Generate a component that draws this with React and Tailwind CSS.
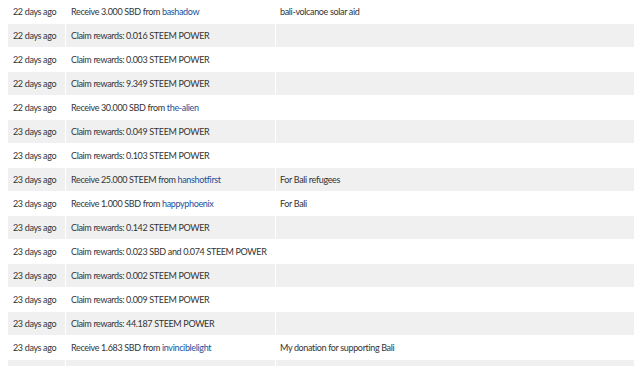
import React from "react";

const rows = [
  ["22 days ago", ["Receive 3.000 SBD from ", "bashadow"], "bali-volcanoe solar aid"],
  ["22 days ago", ["Claim rewards: 0.016 STEEM POWER"], ""],
  ["22 days ago", ["Claim rewards: 0.003 STEEM POWER"], ""],
  ["22 days ago", ["Claim rewards: 9.349 STEEM POWER"], ""],
  ["22 days ago", ["Receive 30.000 SBD from ", "the-alien"], ""],
  ["23 days ago", ["Claim rewards: 0.049 STEEM POWER"], ""],
  ["23 days ago", ["Claim rewards: 0.103 STEEM POWER"], ""],
  ["23 days ago", ["Receive 25.000 STEEM from ", "hanshotfirst"], "For Bali refugees"],
  ["23 days ago", ["Receive 1.000 SBD from ", "happyphoenix"], "For Bali"],
  ["23 days ago", ["Claim rewards: 0.142 STEEM POWER"], ""],
  ["23 days ago", ["Claim rewards: 0.023 SBD and 0.074 STEEM POWER"], ""],
  ["23 days ago", ["Claim rewards: 0.002 STEEM POWER"], ""],
  ["23 days ago", ["Claim rewards: 0.009 STEEM POWER"], ""],
  ["23 days ago", ["Claim rewards: 44.187 STEEM POWER"], ""],
  ["23 days ago", ["Receive 1.683 SBD from ", "invinciblelight"], "My donation for supporting Bali"],
  ["23 days ago", ["Claim rewards: 0.010 STEEM POWER"], ""],
];

export default function App() {
  return (
    <div
      className="w-[640px] h-[366px] overflow-hidden bg-white pl-[8px] pr-[6px] text-[9px] tracking-[-0.35px] text-[#333]"
      style={{ fontFamily: "Lato, 'Noto Sans', sans-serif" }}
    >
      <div className="flex flex-col">
        {rows.map((r, i) => {
          const bg = i % 2 === 1 ? "bg-[#f0f0f0]" : "bg-white";
          return (
            <div key={i} className="flex h-[24px] gap-[1px] pb-[1px]">
              <div className={`w-[57px] shrink-0 leading-[23px] pl-[5px] whitespace-nowrap overflow-hidden ${bg}`}>{r[0]}</div>
              <div className={`w-[209px] shrink-0 leading-[23px] pl-[5px] whitespace-nowrap overflow-hidden ${bg}`}>
                <span>{r[1][0]}</span>
                {r[1].length > 1 ? <span className="text-[#1a5099]">{r[1][1]}</span> : null}
              </div>
              <div className={`flex-1 leading-[23px] pl-[4px] whitespace-nowrap overflow-hidden ${bg}`}>{r[2]}</div>
            </div>
          );
        })}
      </div>
    </div>
  );
}
